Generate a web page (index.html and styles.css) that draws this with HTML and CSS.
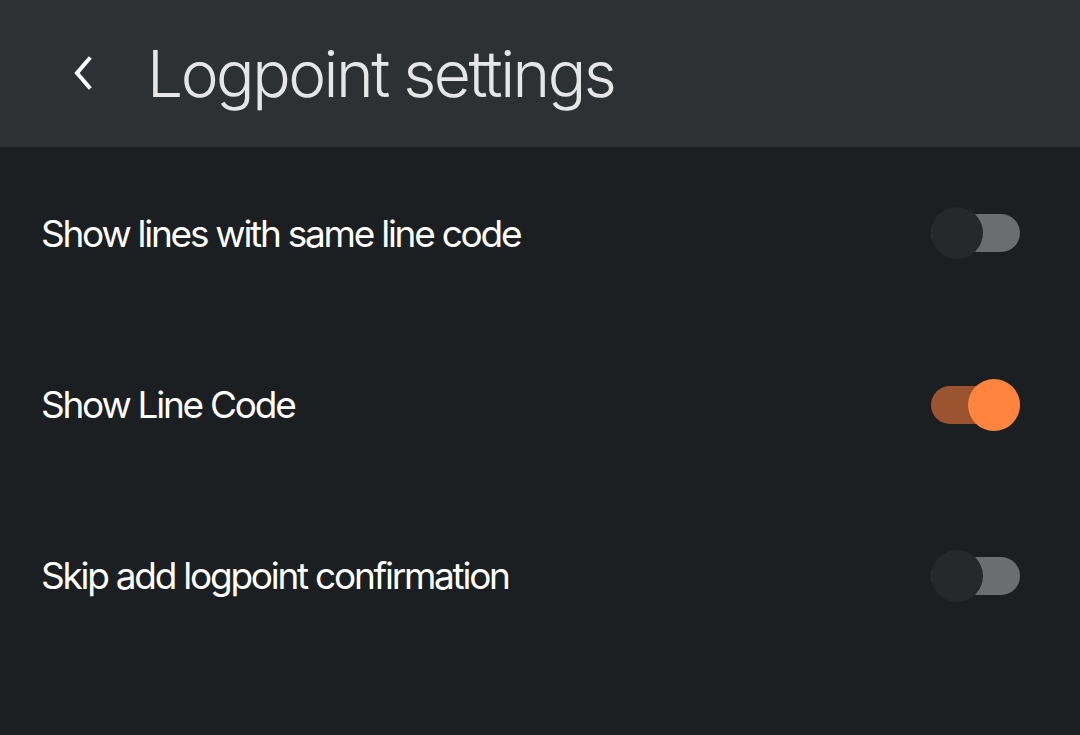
FILE: index.html
```html
<!DOCTYPE html>
<html>
<head>
<meta charset="utf-8">
<link rel="stylesheet" href="styles.css">
</head>
<body>
<header class="topbar">
  <button class="back" aria-label="Back">
    <svg width="24" height="34" viewBox="0 0 24 34"><path d="M17 3 L5 17 L17 31" fill="none" stroke="#ffffff" stroke-width="4" stroke-linecap="square" stroke-linejoin="miter"/></svg>
  </button>
  <h1 class="title">Logpoint settings</h1>
</header>
<main class="list">
  <div class="row">
    <span class="label">Show lines with same line code</span>
    <span class="switch"><span class="track"></span><span class="thumb"></span></span>
  </div>
  <div class="row">
    <span class="label">Show Line Code</span>
    <span class="switch on"><span class="track"></span><span class="thumb"></span></span>
  </div>
  <div class="row">
    <span class="label">Skip add logpoint confirmation</span>
    <span class="switch"><span class="track"></span><span class="thumb"></span></span>
  </div>
</main>
</body>
</html>
```
FILE: styles.css
```css
html, body {
  margin: 0;
  padding: 0;
  height: 100%;
}
body {
  background: #1b1f21;
  font-family: Inter, "Noto Sans", sans-serif;
  color: #ffffff;
}
.topbar {
  height: 147px;
  background: #2e3134;
  display: flex;
  align-items: center;
  padding-left: 67px;
  box-sizing: border-box;
}
.back {
  background: none;
  border: 0;
  padding: 0;
  width: 34px;
  height: 34px;
  display: flex;
  align-items: center;
  justify-content: center;
  margin-top: -2px;
}
.title {
  margin: 0 0 0 46px;
  font-size: 64px;
  font-weight: 300;
  color: #e6e6e6;
  letter-spacing: -2.5px;
}
.list {
  display: flex;
  flex-direction: column;
  padding-top: 0;
}
.row {
  height: 171px;
  display: flex;
  align-items: center;
  justify-content: space-between;
  padding: 0 60px 0 41px;
}
.row:first-child {
  height: 172px;
}
.label {
  font-size: 37px;
  letter-spacing: -2.25px;
}
.switch {
  position: relative;
  width: 89px;
  height: 52px;
  display: block;
}
.track {
  position: absolute;
  left: 0;
  top: 7px;
  width: 89px;
  height: 38px;
  border-radius: 19px;
  background: #6b6e71;
}
.thumb {
  position: absolute;
  left: 0;
  top: 0;
  width: 52px;
  height: 52px;
  border-radius: 50%;
  background: #25292c;
}
.switch.on .track {
  background: #9a5430;
}
.switch.on .thumb {
  left: 37px;
  background: #ff843d;
}
```
